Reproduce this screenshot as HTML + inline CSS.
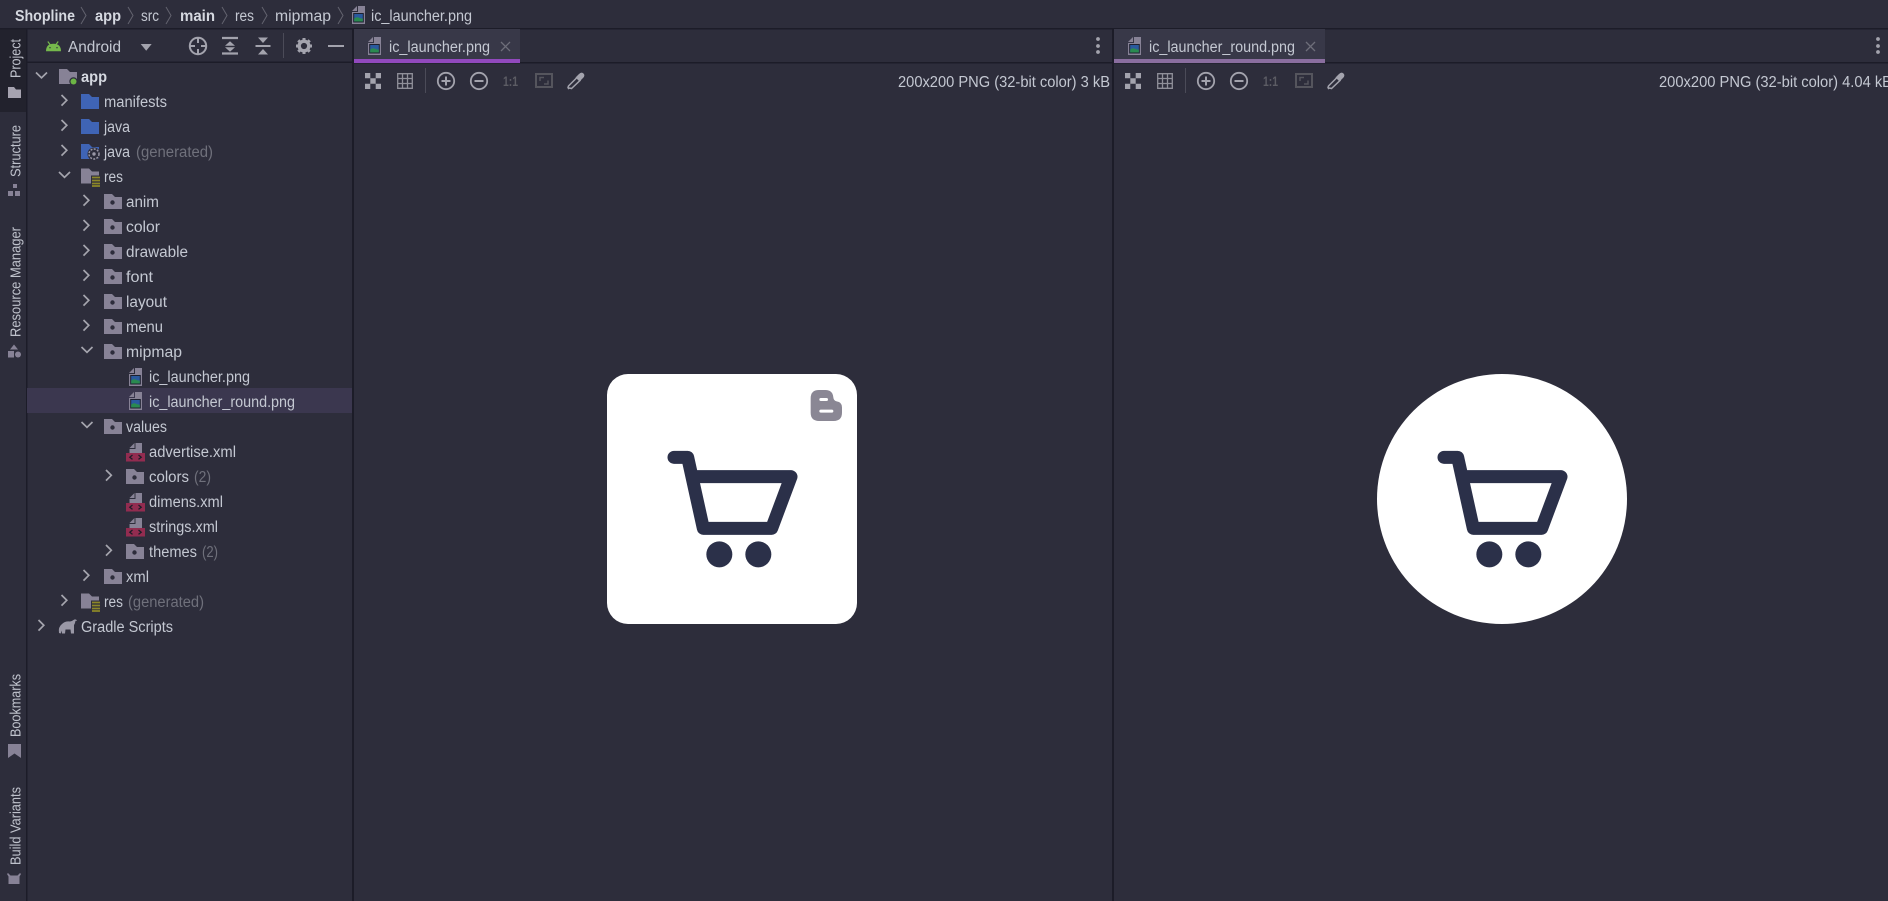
<!DOCTYPE html>
<html lang="en">
<head>
<meta charset="utf-8">
<title>Shopline - ic_launcher.png</title>
<style>
html,body{margin:0;padding:0;width:1888px;height:901px;overflow:hidden;background:#2d2d3b}
svg{display:block;position:absolute;left:0;top:0}
text{font-family:"Liberation Sans",sans-serif;font-size:15.5px;fill:#c4c8d2}
.b{font-weight:bold;fill:#d5d8e0}
.g{fill:#6f707b}
.s{font-size:14.5px;fill:#bfc2cc}
.ln{fill:none;stroke:#a3a3ad;stroke-width:1.8}
.o{font-weight:bold;font-size:14px;fill:#5c5c64}
</style>
</head>
<body>
<svg width="1888" height="901" viewBox="0 0 1888 901" xmlns="http://www.w3.org/2000/svg">
<defs>
  <path id="cr" d="M0 0l5.300 5.300-5.300 5.300" fill="none" stroke="#a5a5ae" stroke-width="1.700"/>
  <path id="cd" d="M0 0l5.500 5.300 5.500-5.300" fill="none" stroke="#a5a5ae" stroke-width="1.700"/>
  <path id="bc" d="M0 0l5 8.500-5 8.500" fill="none" stroke="#63636f" stroke-width="1"/>
  <g id="fd"><path d="M0 0H8L11 3H18V15H0Z" fill="#878296"/><circle cx="8.5" cy="8.500" r="2.200" fill="#2d2d3b"/></g>
  <path id="fb" d="M0 0H8L11 3H18V15H0Z" fill="#3f64b5"/>
  <path id="fp" d="M0 0H8L11 3H18V15H0Z" fill="#878296"/>
  <g id="png">
    <path d="M0 5L5 0V5Z" fill="#878296"/>
    <path d="M6 0H13V18H0V6H6Z" fill="#878296"/>
    <rect x="1.200" y="7" width="10.600" height="9.500" fill="#1d2030"/>
    <rect x="2.200" y="8" width="8.600" height="7.500" fill="#2a5a9e"/>
    <path d="M2.200 15.500V12.500Q5 10.300 7.500 12Q9.500 12.800 10.800 12.500V15.500Z" fill="#2a8a50"/>
  </g>
  <g id="xml">
    <path d="M3.500 5L8.500 0V5Z" fill="#878296"/>
    <path d="M9.500 0H16V11H3.500V6H9.500Z" fill="#878296"/>
    <rect x="0" y="10" width="19" height="8.500" fill="#922c50"/>
    <path d="M6.500 12L3.800 14.200 6.500 16.400M12.500 12L15.200 14.200 12.500 16.400" fill="none" stroke="#1d1d28" stroke-width="1.300"/>
  </g>
  <g id="res">
    <path d="M0 0H8L11 3H18V15H0Z" fill="#878296" transform="translate(0 -.5)"/>
    <rect x="10" y="6.500" width="9" height="11" fill="#2d2d3b"/>
    <path d="M11 8.500H19M11 11.500H19M11 14.500H19M11 17H19" stroke="#8c8728" stroke-width="1.700"/>
  </g>
  <g id="tb">
    <path d="M0 0h5.300v5.300H0zM10.700 0H16v5.300h-5.300zM5.300 5.300h5.400v5.400H5.300zM0 10.700h5.300V16H0zM10.700 10.700H16V16h-5.300z" fill="#a3a3ad"/>
    <path d="M32.700.7h14.600v14.600H32.700zM32.700 5.500h14.600M32.700 10.500h14.600M37.500.7v14.600M42.500.7v14.600" fill="none" stroke="#8f8f99" stroke-width="1.300"/>
    <rect x="60" y="-5" width="1" height="25" fill="#4b4b58"/>
    <circle cx="81" cy="8" r="8.200" class="ln"/><path d="M76.500 8h9M81 3.500v9" stroke="#a3a3ad" stroke-width="2"/>
    <circle cx="114" cy="8" r="8.200" class="ln"/><path d="M109.500 8h9" stroke="#a3a3ad" stroke-width="2"/>
    <rect x="171" y="1" width="16" height="13" fill="none" stroke="#55555d" stroke-width="2"/>
    <path d="M175 8V4.500h4M183 7.500v3.500h-4" fill="none" stroke="#55555d" stroke-width="1.500"/>
    <path d="M204.500 15l-1 .5-.5-1 .5-1.500 8.500-8.500 3 3-8.500 8Z" fill="none" stroke="#a3a3ad" stroke-width="1.500"/>
    <path d="M210.500 4.500L214 1Q216.500-1.500 218.500.5 220.500 2.500 218 5L214.500 8.500Z" fill="#a3a3ad"/>
  </g>
  <g id="cart">
    <path d="M252 292H293L340 505H545L603 350H315" fill="none" stroke="#2b3049" stroke-width="39" stroke-linecap="round" stroke-linejoin="round"/>
    <circle cx="388" cy="583" r="39" fill="#2b3049"/><circle cx="505" cy="583" r="39" fill="#2b3049"/>
  </g>
</defs>

<!-- backgrounds -->
<rect width="1888" height="901" fill="#2d2d3b"/>
<rect x="0" y="28" width="26" height="84" fill="#22222d"/>
<rect x="0" y="28" width="1888" height="1.500" fill="#1c1c28"/>
<rect x="26" y="28" width="1.500" height="873" fill="#1c1c28"/>
<rect x="352" y="28" width="2" height="873" fill="#1c1c28"/>
<rect x="27" y="61.500" width="325" height="1.500" fill="#1c1c28"/>
<rect x="354" y="62" width="1534" height="1.500" fill="#1c1c28"/>
<rect x="1112" y="28" width="2" height="873" fill="#1c1c28"/>
<rect x="27" y="388" width="325" height="25" fill="#3b374f"/>

<!-- breadcrumb -->
<text x="15" y="21" textLength="60" lengthAdjust="spacingAndGlyphs" class="b">Shopline</text>
<use href="#bc" x="81" y="7"/>
<text x="95" y="21" textLength="26" lengthAdjust="spacingAndGlyphs" class="b">app</text>
<use href="#bc" x="128" y="7"/>
<text x="141" y="21" textLength="18" lengthAdjust="spacingAndGlyphs">src</text>
<use href="#bc" x="166" y="7"/>
<text x="180" y="21" textLength="35" lengthAdjust="spacingAndGlyphs" class="b">main</text>
<use href="#bc" x="222" y="7"/>
<text x="235" y="21" textLength="19" lengthAdjust="spacingAndGlyphs">res</text>
<use href="#bc" x="262" y="7"/>
<text x="275" y="21" textLength="56" lengthAdjust="spacingAndGlyphs">mipmap</text>
<use href="#bc" x="338" y="7"/>
<use href="#png" x="352" y="6"/>
<text x="371" y="21" textLength="101" lengthAdjust="spacingAndGlyphs">ic_launcher.png</text>

<!-- side strip -->
<text transform="translate(20.500 78) rotate(-90)" textLength="39" lengthAdjust="spacingAndGlyphs" class="s">Project</text>
<path d="M8 87H14L16 89.500H21V98H8Z" fill="#a6a3b0"/>
<text transform="translate(20.500 177) rotate(-90)" textLength="52" lengthAdjust="spacingAndGlyphs" class="s">Structure</text>
<path d="M13 184h4v4h-4zM8 191h5v5H8zM15 191h5v5h-5z" fill="#878296"/>
<text transform="translate(20.500 337) rotate(-90)" textLength="110" lengthAdjust="spacingAndGlyphs" class="s">Resource Manager</text>
<path d="M14 344.500l4 5h-8zM8 351h6v6.500H8z" fill="#878296"/><circle cx="18" cy="354.500" r="3" fill="#878296"/>
<text transform="translate(20.500 737) rotate(-90)" textLength="63" lengthAdjust="spacingAndGlyphs" class="s">Bookmarks</text>
<path d="M8 744H21V758L14.500 753.500 8 758Z" fill="#878296"/>
<text transform="translate(20.500 865) rotate(-90)" textLength="78" lengthAdjust="spacingAndGlyphs" class="s">Build Variants</text>
<path d="M8 873l2.500 2.500h7l2.500-2.500 1 1-1.500 2.500V884H8.500V876.500L7 874Z" fill="#878296"/>

<!-- panel header -->
<path d="M46 51.200q0-7.500 7.500-7.500t7.500 7.500Z" fill="#75b84c"/>
<path d="M47.800 41.500l2.600 3.500M58.200 41.500l-2.600 3.500" stroke="#75b84c" stroke-width="1.200"/>
<circle cx="50" cy="47.700" r=".7" fill="#2d2d3b"/><circle cx="57" cy="47.700" r=".7" fill="#2d2d3b"/>
<text x="68" y="52" textLength="53" lengthAdjust="spacingAndGlyphs">Android</text>
<path d="M140.700 44H151.700L146.200 50.700Z" fill="#a3a3ad"/>
<circle cx="198" cy="46" r="8.200" fill="none" stroke="#a3a3ad" stroke-width="2"/>
<path d="M198 37.500v5.500M198 49v5.500M189.500 46h5.500M201 46h5.500" stroke="#a3a3ad" stroke-width="2"/>
<path d="M222 38H238M222 53.500H238" stroke="#a3a3ad" stroke-width="2.200"/>
<path d="M225 46L230 41.500 235 46ZM225 47.500L230 52 235 47.500Z" fill="#a3a3ad" transform="translate(0 -.2)"/>
<path d="M255.500 46H270.500" stroke="#a3a3ad" stroke-width="2"/>
<path d="M258 37.500L263 43 268 37.500ZM258 54.500L263 49 268 54.500Z" fill="#a3a3ad"/>
<rect x="283" y="33" width="1" height="25" fill="#4b4b58"/>
<circle cx="304" cy="46" r="4.800" fill="none" stroke="#a3a3ad" stroke-width="3.400"/>
<path d="M304 38v3M304 51v3M296 46h3M309 46h3M298.300 40.300l2 2M307.700 49.700l2 2M298.300 51.700l2-2M307.700 42.300l2-2" stroke="#a3a3ad" stroke-width="3"/>
<rect x="328" y="45" width="16" height="2" fill="#a3a3ad"/>

<!-- tree -->
<use href="#cd" x="36" y="72.500"/>
<use href="#fp" x="59" y="69"/>
<circle cx="73.500" cy="81.500" r="4.200" fill="#2d2d3b"/><circle cx="73.500" cy="81.500" r="3" fill="#6cb545"/>
<text x="81" y="82" textLength="26" lengthAdjust="spacingAndGlyphs" class="b">app</text>

<use href="#cr" x="61.500" y="95"/><use href="#fb" x="81" y="94"/>
<text x="104" y="107" textLength="63" lengthAdjust="spacingAndGlyphs">manifests</text>
<use href="#cr" x="61.500" y="120"/><use href="#fb" x="81" y="119"/>
<text x="104" y="132" textLength="26" lengthAdjust="spacingAndGlyphs">java</text>
<use href="#cr" x="61.500" y="145"/><use href="#fb" x="81" y="144"/>
<circle cx="94" cy="154" r="6.500" fill="#2d2d3b"/><circle cx="94" cy="154" r="5" fill="none" stroke="#9a98a6" stroke-width="1.500" stroke-dasharray="2 1.300"/><circle cx="94" cy="154" r="1.700" fill="#9a98a6"/>
<text x="104" y="157" textLength="26" lengthAdjust="spacingAndGlyphs">java</text>
<text x="136" y="157" textLength="77" lengthAdjust="spacingAndGlyphs" class="g">(generated)</text>
<use href="#cd" x="59" y="172"/><use href="#res" x="81" y="169"/>
<text x="104" y="182" textLength="19" lengthAdjust="spacingAndGlyphs">res</text>

<use href="#cr" x="83.500" y="195"/><use href="#fd" x="104" y="194"/>
<text x="126" y="207" textLength="33" lengthAdjust="spacingAndGlyphs">anim</text>
<use href="#cr" x="83.500" y="220"/><use href="#fd" x="104" y="219"/>
<text x="126" y="232" textLength="34" lengthAdjust="spacingAndGlyphs">color</text>
<use href="#cr" x="83.500" y="245"/><use href="#fd" x="104" y="244"/>
<text x="126" y="257" textLength="62" lengthAdjust="spacingAndGlyphs">drawable</text>
<use href="#cr" x="83.500" y="270"/><use href="#fd" x="104" y="269"/>
<text x="126" y="282" textLength="27" lengthAdjust="spacingAndGlyphs">font</text>
<use href="#cr" x="83.500" y="295"/><use href="#fd" x="104" y="294"/>
<text x="126" y="307" textLength="41" lengthAdjust="spacingAndGlyphs">layout</text>
<use href="#cr" x="83.500" y="320"/><use href="#fd" x="104" y="319"/>
<text x="126" y="332" textLength="37" lengthAdjust="spacingAndGlyphs">menu</text>
<use href="#cd" x="81.500" y="347"/><use href="#fd" x="104" y="344"/>
<text x="126" y="357" textLength="56" lengthAdjust="spacingAndGlyphs">mipmap</text>

<use href="#png" x="129" y="368"/>
<text x="149" y="382" textLength="101" lengthAdjust="spacingAndGlyphs">ic_launcher.png</text>
<use href="#png" x="129" y="392"/>
<text x="149" y="407" textLength="146" lengthAdjust="spacingAndGlyphs">ic_launcher_round.png</text>

<use href="#cd" x="81.500" y="422"/><use href="#fd" x="104" y="419"/>
<text x="126" y="432" textLength="41" lengthAdjust="spacingAndGlyphs">values</text>
<use href="#xml" x="126" y="443"/>
<text x="149" y="457" textLength="87" lengthAdjust="spacingAndGlyphs">advertise.xml</text>
<use href="#cr" x="106" y="470"/><use href="#fd" x="126" y="469"/>
<text x="149" y="482" textLength="40" lengthAdjust="spacingAndGlyphs">colors</text>
<text x="194" y="482" textLength="17" lengthAdjust="spacingAndGlyphs" class="g">(2)</text>
<use href="#xml" x="126" y="493"/>
<text x="149" y="507" textLength="74" lengthAdjust="spacingAndGlyphs">dimens.xml</text>
<use href="#xml" x="126" y="518"/>
<text x="149" y="532" textLength="69" lengthAdjust="spacingAndGlyphs">strings.xml</text>
<use href="#cr" x="106" y="545"/><use href="#fd" x="126" y="544"/>
<text x="149" y="557" textLength="48" lengthAdjust="spacingAndGlyphs">themes</text>
<text x="202" y="557" textLength="16" lengthAdjust="spacingAndGlyphs" class="g">(2)</text>
<use href="#cr" x="83.500" y="570"/><use href="#fd" x="104" y="569"/>
<text x="126" y="582" textLength="23" lengthAdjust="spacingAndGlyphs">xml</text>
<use href="#cr" x="61.500" y="595"/><use href="#res" x="81" y="594"/>
<text x="104" y="607" textLength="19" lengthAdjust="spacingAndGlyphs">res</text>
<text x="128" y="607" textLength="76" lengthAdjust="spacingAndGlyphs" class="g">(generated)</text>
<use href="#cr" x="38.500" y="620"/>
<path d="M59 633q-1-6 3-9 3-3 8-2.500 2-.3 3.500-1.500 2.500-1.500 3.500.8-1 .2-1.500 0-.5 3-1.500 4.200v8.500h-3l-.5-4h-5l-.5 4h-3l-.3-3-1 3Z" fill="#9a98a6"/>
<text x="81" y="632" textLength="92" lengthAdjust="spacingAndGlyphs">Gradle Scripts</text>

<!-- tab 1 -->
<rect x="354" y="29" width="166" height="30" fill="#383848"/>
<rect x="354" y="59" width="166" height="4" fill="#9149bd"/>
<use href="#png" x="368" y="37"/>
<text x="389" y="52" textLength="101" lengthAdjust="spacingAndGlyphs">ic_launcher.png</text>
<path d="M501 42l9 9M510 42l-9 9" stroke="#6e6e7a" stroke-width="1.300"/>
<circle cx="1098" cy="39" r="1.900" fill="#a3a3ad"/><circle cx="1098" cy="46" r="1.900" fill="#a3a3ad"/><circle cx="1098" cy="52" r="1.900" fill="#a3a3ad"/>
<use href="#tb" x="365" y="73"/>
<text x="503" y="86" textLength="15" lengthAdjust="spacingAndGlyphs" class="o">1:1</text>
<text x="898" y="87" textLength="212" lengthAdjust="spacingAndGlyphs">200x200 PNG (32-bit color) 3 kB</text>

<!-- tab 2 -->
<rect x="1114" y="29" width="211" height="30" fill="#383848"/>
<rect x="1114" y="59" width="211" height="4" fill="#8a6e9f"/>
<use href="#png" x="1128" y="37"/>
<text x="1149" y="52" textLength="146" lengthAdjust="spacingAndGlyphs">ic_launcher_round.png</text>
<path d="M1306 42l9 9M1315 42l-9 9" stroke="#6e6e7a" stroke-width="1.300"/>
<circle cx="1878" cy="39" r="1.900" fill="#a3a3ad"/><circle cx="1878" cy="46" r="1.900" fill="#a3a3ad"/><circle cx="1878" cy="52" r="1.900" fill="#a3a3ad"/>
<use href="#tb" x="1125" y="73"/>
<text x="1263" y="86" textLength="15" lengthAdjust="spacingAndGlyphs" class="o">1:1</text>
<text x="1659" y="87" textLength="233" lengthAdjust="spacingAndGlyphs">200x200 PNG (32-bit color) 4.04 kB</text>

<!-- image 1 -->
<rect x="607" y="374" width="250" height="250" rx="21" ry="21" fill="#fff"/>
<g transform="translate(590 360) scale(.33333)">
  <use href="#cart"/>
  <path d="M662 115Q662 90 687 90H706Q728 90 730 112 731 122 740 124 756 126 756 142V158Q756 183 731 183H687Q662 183 662 158Z" fill="#8a8794"/>
  <rect x="688" y="114" width="26" height="9" rx="4.500" fill="#fff"/>
  <rect x="688" y="149" width="42" height="9" rx="4.500" fill="#fff"/>
</g>

<!-- image 2 -->
<circle cx="1502" cy="499" r="125" fill="#fff"/>
<g transform="translate(1360 360) scale(.33333)"><use href="#cart"/></g>
</svg>
</body>
</html>
